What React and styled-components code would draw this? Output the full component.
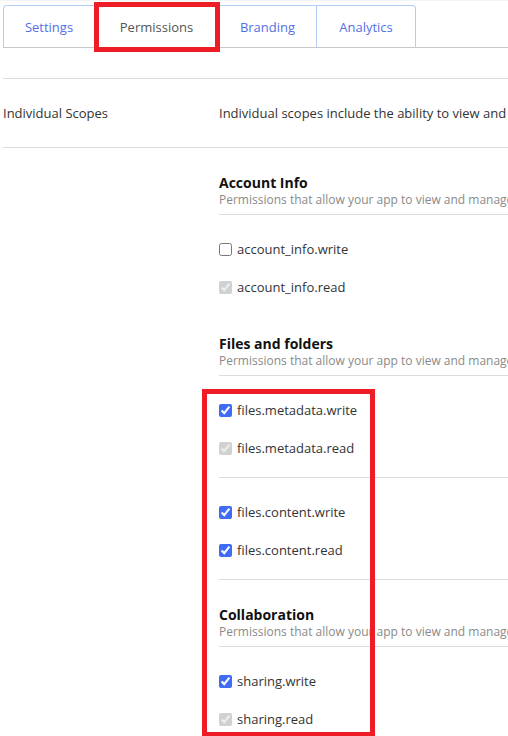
import styled, { createGlobalStyle } from 'styled-components'

const GlobalStyle = createGlobalStyle`
  html, body {
    margin: 0;
    padding: 0;
    background: #fff;
    overflow: hidden;
  }
  body {
    font-family: 'Open Sans', 'Noto Sans', sans-serif;
    font-size: 13px;
    color: #333;
  }
`

const Page = styled.div`
  position: relative;
  width: 508px;
  height: 736px;
  overflow: hidden;
  padding: 5px 0 0 3px;
  box-sizing: border-box;
  border-top: 1px solid #f4f4f4;
`

const TabBar = styled.div`
  display: flex;
  height: 43px;
  box-sizing: border-box;
  border-bottom: 1px solid #c8c8c8;
  margin-top: -1px;
`

const Tab = styled.div`
  width: ${(p) => p.$width}px;
  box-sizing: border-box;
  display: flex;
  align-items: center;
  justify-content: center;
  border-top: 1px solid #b3cdf6;
  border-right: 1px solid #b3cdf6;
  border-left: ${(p) => (p.$first ? '1px solid #b3cdf6' : 'none')};
  border-radius: ${(p) => (p.$first ? '4px 0 0 0' : p.$last ? '0 4px 0 0' : '0')};
  color: ${(p) => (p.$active ? '#555' : '#5470e4')};
  font-size: 13px;
  background: #fff;
`

const ScopeRow = styled.div`
  display: flex;
  align-items: center;
  height: 68px;
  margin-top: 30px;
  border-top: 1px solid #dcdcdc;
  border-bottom: 1px solid #dcdcdc;
  white-space: nowrap;
  margin-right: -40px;
`

const ScopeLabel = styled.div`
  width: 216px;
  flex: none;
`

const ScopeText = styled.div`
  white-space: nowrap;
`

const Content = styled.div`
  margin-left: 216px;
  padding-top: 7px;
`

const SectionHead = styled.div`
  padding-top: 19px;
  padding-bottom: 6px;
  border-bottom: 1px solid #dcdcdc;
  white-space: nowrap;
  margin-right: -40px;
`

const Title = styled.div`
  font-size: 14px;
  font-weight: 700;
  line-height: 18px;
  color: #111;
`

const Subtitle = styled.div`
  font-size: 12px;
  line-height: 16px;
  color: #8a8a8a;
`

const Group = styled.div`
  padding: 15px 0 10px;
  border-bottom: ${(p) => (p.$divider ? '1px solid #dcdcdc' : 'none')};
  margin-right: -40px;
  margin-bottom: ${(p) => (p.$gap ? '7px' : '0')};
`

const Row = styled.label`
  display: flex;
  align-items: center;
  gap: 5px;
  height: 38px;
  font-size: 13px;
  color: #333;
`

const Box = styled.input`
  width: 13px;
  height: 13px;
  margin: 0;
  accent-color: #3e6cf4;
`

const Marker = styled.div`
  position: absolute;
  border: 5px solid #ee1c25;
  box-sizing: border-box;
  pointer-events: none;
`

const desc = 'Permissions that allow your app to view and manage'

const Check = ({ name, checked, disabled }) => (
  <Row>
    <Box type="checkbox" defaultChecked={checked} disabled={disabled} />
    {name}
  </Row>
)

export default function App() {
  return (
    <>
      <GlobalStyle />
      <Page>
        <TabBar>
          <Tab $width={92} $first>Settings</Tab>
          <Tab $width={124} $active>Permissions</Tab>
          <Tab $width={98}>Branding</Tab>
          <Tab $width={99} $last>Analytics</Tab>
        </TabBar>

        <ScopeRow>
          <ScopeLabel>Individual Scopes</ScopeLabel>
          <ScopeText>Individual scopes include the ability to view and manage your data</ScopeText>
        </ScopeRow>

        <Content>
          <SectionHead>
            <Title>Account Info</Title>
            <Subtitle>{desc} account information</Subtitle>
          </SectionHead>
          <Group>
            <Check name="account_info.write" />
            <Check name="account_info.read" checked disabled />
          </Group>

          <SectionHead>
            <Title>Files and folders</Title>
            <Subtitle>{desc} files and folders</Subtitle>
          </SectionHead>
          <Group $divider>
            <Check name="files.metadata.write" checked />
            <Check name="files.metadata.read" checked disabled />
          </Group>
          <Group $divider $gap>
            <Check name="files.content.write" checked />
            <Check name="files.content.read" checked />
          </Group>

          <SectionHead>
            <Title>Collaboration</Title>
            <Subtitle>{desc} sharing and collaboration</Subtitle>
          </SectionHead>
          <Group>
            <Check name="sharing.write" checked />
            <Check name="sharing.read" checked disabled />
          </Group>
        </Content>

        <Marker style={{ left: 94, top: 1, width: 126, height: 50 }} />
        <Marker style={{ left: 202, top: 388, width: 173, height: 348 }} />
      </Page>
    </>
  )
}
